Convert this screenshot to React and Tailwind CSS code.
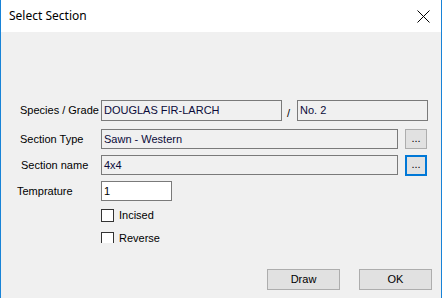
import React from "react";

const field =
  "h-full border border-[#7a7a7a] bg-[#f0f0f0] px-[2px] flex items-center text-[11px] text-[#0b0b3a] leading-none";

function Dots() {
  return (
    <button className="w-[22px] h-full border border-[#adadad] bg-[#e1e1e1] flex items-center justify-center text-[11px] leading-none pb-[2px]">
      ...
    </button>
  );
}

function Check({ label }) {
  return (
    <div className="flex items-center gap-[5px]">
      <span className="block w-[13px] h-[13px] border border-[#333] bg-white shrink-0" />
      <span className="text-[11px] leading-none text-black">{label}</span>
    </div>
  );
}

export default function App() {
  return (
    <div
      className="w-[442px] h-[298px] overflow-hidden border-x border-[#1883d7] bg-[#f0f0f0] flex flex-col"
      style={{ fontFamily: '"Liberation Sans", Arial, sans-serif' }}
    >
      {/* title bar */}
      <div className="h-[32px] bg-white flex items-center justify-between pl-[8px] pr-[10px] shrink-0">
        <span
          className="text-[12px] text-black"
          style={{ fontFamily: '"Noto Sans", sans-serif' }}
        >
          Select Section
        </span>
        <svg width="13" height="13" viewBox="0 0 13 13" className="mr-[1px]">
          <path d="M0.5 0.5 L12.5 12.5 M12.5 0.5 L0.5 12.5" stroke="#000" strokeWidth="1" />
        </svg>
      </div>

      {/* body */}
      <div className="flex flex-col text-[11px] text-black">
        <div className="mt-[68px] h-[21px] flex items-center">
          <span className="w-[100px] pl-[19px]">Species / Grade</span>
          <div className={field + " w-[181px]"}>DOUGLAS FIR-LARCH</div>
          <span className="w-[15px] pl-[5px] pt-[6px]">/</span>
          <div className={field + " w-[131px]"}>No. 2</div>
        </div>

        <div className="mt-[8px] h-[20px] flex items-center">
          <span className="w-[100px] pl-[19px]">Section Type</span>
          <div className={field + " w-[297px]"}>Sawn - Western</div>
          <div className="ml-[7px] h-full flex">
            <Dots />
          </div>
        </div>

        <div className="mt-[6px] h-[20px] flex items-center">
          <span className="w-[100px] pl-[20px]">Section name</span>
          <div className={field + " w-[297px]"}>4x4</div>
          <div className="ml-[7px] h-full flex">
            <button className="w-[22px] h-[21px] border-2 border-[#0078d7] bg-[#e1e1e1] flex items-center justify-center text-[11px] leading-none pb-[2px]">
              ...
            </button>
          </div>
        </div>

        <div className="mt-[6px] h-[20px] flex items-center">
          <span className="w-[100px] pl-[16px]">Temprature</span>
          <div className="h-full w-[71px] border border-[#7a7a7a] bg-white px-[2px] flex items-center leading-none">
            1
          </div>
        </div>

        <div className="mt-[8px] pl-[100px]">
          <Check label="Incised" />
        </div>

        <div className="mt-[10px] pl-[100px] h-[11px] overflow-hidden">
          <div className="pt-[0px]">
            <Check label="Reverse" />
          </div>
        </div>

        <div className="mt-[26px] flex pl-[266px] gap-[19px]">
          <button className="w-[73px] h-[21px] border border-[#adadad] bg-[#e1e1e1] text-[11px] leading-none">
            Draw
          </button>
          <button className="w-[73px] h-[21px] border border-[#adadad] bg-[#e1e1e1] text-[11px] leading-none">
            OK
          </button>
        </div>
      </div>
    </div>
  );
}
